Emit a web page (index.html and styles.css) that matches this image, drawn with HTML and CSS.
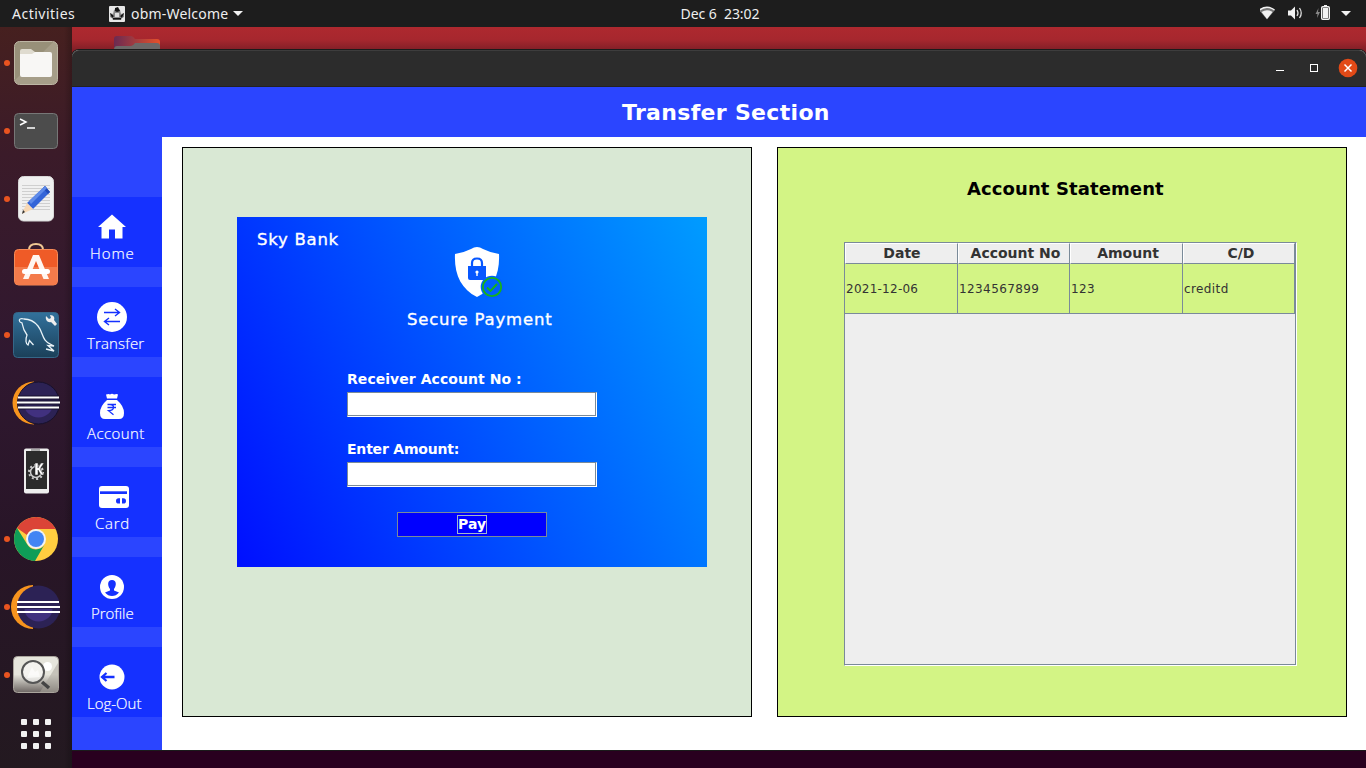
FILE: index.html
```
<!DOCTYPE html>
<html lang="en">
<head>
<meta charset="utf-8">
<title>obm-Welcome</title>
<link rel="stylesheet" href="styles.css">
</head>
<body>
<div class="topbar">
  <div class="top-left">
    <span class="activities">Activities</span>
    <svg class="app-icon" width="16" height="16" viewBox="0 0 16 16"><rect width="16" height="16" rx="1" fill="#e6e6e6"/><path d="M8 2l3 2 1 4 3-1v4l-2 1-1 2H4l-1-2-2-1V7l3 1 1-4z" fill="#888"/><path d="M6 2l3-1 2 4-3 1-2-1zM1 7l4 3-2 2zM15 7l-4 3 2 2zM4 12h8v1.500H4z" fill="#111"/><path d="M6 7h4v4H6z" fill="#ddd"/></svg>
    <span class="app-name">obm-Welcome</span>
    <svg width="10" height="5" viewBox="0 0 10 5"><path d="M0 0h10L5 5z" fill="#f2f2f2"/></svg>
  </div>
  <div class="clock">Dec 6&nbsp; 23:02</div>
  <svg class="tray" width="106" height="27" viewBox="1260 0 106 27">
    <path d="M1259 10q8-6 16 0l-8 9.500z" fill="#777"/><path d="M1259.500 10q7.500-5.500 15 0" fill="none" stroke="#f2f2f2" stroke-width="1.500"/><path d="M1261.500 12q5.500-3.500 11 0l-5.500 7z" fill="#f2f2f2"/>
    <path d="M1288 10.500h3l4-4v13l-4-4h-3z" fill="#f2f2f2"/><path d="M1297 10q2 3 0 6M1299.500 8q3.500 5 0 10" fill="none" stroke="#ddd" stroke-width="1.300"/>
    <path d="M1318.500 8l-3 6h2l-.5 4 3-6h-2z" fill="#888"/><rect x="1321.700" y="6.700" width="7.600" height="12.600" rx="1" fill="none" stroke="#f2f2f2" stroke-width="1.400"/><path d="M1324 5h3v1.500h-3zM1323 8h5v10h-5z" fill="#f2f2f2"/>
    <path d="M1341 11h10l-5 5z" fill="#f2f2f2"/>
  </svg>
</div>
<div class="desktop">
  <div class="dock">
    <svg class="launcher" viewBox="0 0 72 68"><defs><linearGradient id="tan" x1="0" y1="0" x2="1" y2="1"><stop offset=".45" stop-color="#989079"/><stop offset=".46" stop-color="#a69e89"/></linearGradient></defs><circle cx="7" cy="34" r="3" fill="#e95420"/><rect x="14.500" y="12.500" width="43" height="43" rx="5" fill="url(#tan)" stroke="#bdb6a4"/><path d="M20 24v-2q0-2 2-2h9l4 3h14v6H20z" fill="#dfdbcf"/><path d="M20 25h12l3-2h15q2 0 2 2v21q0 2-2 2H22q-2 0-2-2z" fill="#f8f7f5"/></svg>
    <svg class="launcher" viewBox="0 0 72 68"><circle cx="7" cy="34" r="3" fill="#e95420"/><rect x="14.500" y="16.500" width="43" height="35" rx="4" fill="#4c4c4c" stroke="#777"/><path d="M20 22l6 3-6 3M27 31h8" fill="none" stroke="#fff" stroke-width="1.500"/></svg>
    <svg class="launcher" viewBox="0 0 72 68"><circle cx="7" cy="34" r="3" fill="#e95420"/><rect x="18.500" y="11.500" width="35" height="44.500" rx="5" fill="#f0f0f0" stroke="#d8d8d8"/><path d="M22 20.500h28M22 23.500h28M22 26.500h28M22 29.500h28M22 32.500h28M22 35.500h28M22 38.500h28M22 41.500h28M22 44.500h28" stroke="#cfcfcf"/><path d="M45 21l5 6-17 17-6-6z" fill="#3465d8"/><path d="M43 23l2-2 5 6-2 2z" fill="#204bb8"/><path d="M29 36l16-15 2 2-16 16z" fill="#5f8be9"/><path d="M27 38l6 6-9 4-2 1 1-3z" fill="#f7d8b5"/><path d="M23 45l2 2-3 2z" fill="#333"/></svg>
    <svg class="launcher" viewBox="0 0 72 68"><path d="M29 19v-2q0-6 7-6t7 6v2" fill="none" stroke="#efc793" stroke-width="2"/><rect x="14.500" y="16.500" width="43" height="35.500" rx="4" fill="#ef5b27" stroke="#f58b58"/><path d="M15 34h42v14q0 4-4 4H19q-4 0-4-4z" fill="#f47b4b"/><path d="M33 22h6l10 24h-5.500l-7.500-18-7.500 18H23z" fill="#fff6f0"/><rect x="22" y="36" width="28" height="5" rx="2.500" fill="#fff"/></svg>
    <svg class="launcher" viewBox="0 0 72 68"><defs><linearGradient id="sea" x2="0" y2="1"><stop stop-color="#32719c"/><stop offset="1" stop-color="#1b4059"/></linearGradient></defs><circle cx="7" cy="34" r="3" fill="#e95420"/><rect x="13.500" y="11.500" width="45" height="45" rx="4" fill="url(#sea)" stroke="#356788"/><path d="M20 21c-2-3 1-4 4-3 6 0 10 2 14 7 4 5 4 10 7 14 2 3 5 4 9 6l-6-.5 6 5.500-8-2M20 21l2 1c1 6 2 8 5 12-2 5-1 9 1 10l1.500-4.500 4 4.500" fill="none" stroke="#e8f2f7" stroke-width="1.300"/><path d="M46 15l3 3 2-1-1-3c4 0 5 3 4 5l3 4-2 2-4-4c-3 1-6-2-5-6z" fill="#eee"/></svg>
    <svg class="launcher" viewBox="0 0 72 68"><path d="M34 12.500a21.500 21.500 0 0 0 0 43z" fill="#f7941e"/><circle cx="38.500" cy="34" r="21" fill="#2c2255" stroke="#17112c"/><path d="M24.500 36a14 12.500 0 0 0 28 0z" fill="#41317f"/><path d="M18 28.500h41M17 33.500h43M18 38.500h41" stroke="#17112c" stroke-width="4"/><path d="M18 28.500h41M17 33.500h43M18 38.500h41" stroke="#fff" stroke-width="2.200"/></svg>
    <svg class="launcher" viewBox="0 0 72 68"><rect x="24" y="11.500" width="25" height="45" rx="2" fill="#eee"/><rect x="26" y="14" width="21" height="38" fill="#2b2b2b"/><path d="M31 12h9v2h-9z" fill="#aaa"/><circle cx="36" cy="35" r="5.500" fill="none" stroke="#ccc" stroke-width="1.500"/><circle cx="36" cy="35" r="7" fill="none" stroke="#ccc" stroke-width="2" stroke-dasharray="2 2.400"/><path d="M35 26h3v5l3-5h3l-4 6 4 6h-3l-3-5v5h-3z" fill="#fff" stroke="#2b2b2b" stroke-width=".5"/></svg>
    <svg class="launcher" viewBox="0 0 72 68"><circle cx="7" cy="34" r="3" fill="#e95420"/><circle cx="36" cy="34" r="22" fill="#ffcd40"/><path d="M17 23a22 22 0 0 1 38.700 1H36a10 10 0 0 0-9 6z" fill="#db4437"/><path d="M17 23a22 22 0 0 0 18 33l9.500-16.500A10 10 0 0 1 27 39z" fill="#0f9d58"/><circle cx="36" cy="34" r="10" fill="#f2f2f2"/><circle cx="36" cy="34" r="8" fill="#4285f4"/></svg>
    <svg class="launcher" viewBox="0 0 72 68"><circle cx="7" cy="34" r="3" fill="#e95420"/><path d="M33 12a22 22 0 0 0 0 44z" fill="#f7941e"/><circle cx="38.500" cy="34" r="21.500" fill="#2c2255"/><path d="M24.500 36a14 12.500 0 0 0 28 0z" fill="#41317f"/><path d="M17 29h42M17 34h43M17 39h43" stroke="#fff" stroke-width="2"/></svg>
    <svg class="launcher" viewBox="0 0 72 68"><defs><linearGradient id="photo" x2="0" y2="1"><stop offset=".5" stop-color="#e6e5dc"/><stop offset="1" stop-color="#6d6663"/></linearGradient></defs><circle cx="7" cy="34" r="3" fill="#e95420"/><rect x="13.500" y="15.500" width="45" height="36" rx="4" fill="url(#photo)" stroke="#aaa59d"/><path d="M40 51l18-29v25q0 4-4 4z" fill="#aaa59c" opacity=".55"/><circle cx="47.500" cy="25.500" r="4.500" fill="#fff"/><circle cx="33" cy="31" r="11" fill="#fff" fill-opacity=".55" stroke="#555" stroke-width="2"/><path d="M27 37l5-11 3 5 3-2 2 7z" fill="#fff" opacity=".6"/><path d="M42 41l7 6" stroke="#444" stroke-width="3.500"/></svg>
    <svg class="all-apps" viewBox="0 0 72 50"><g fill="#f2f2f2"><rect x="21" y="10" width="6" height="6" rx="1"/><rect x="33" y="10" width="6" height="6" rx="1"/><rect x="45" y="10" width="6" height="6" rx="1"/><rect x="21" y="22" width="6" height="6" rx="1"/><rect x="33" y="22" width="6" height="6" rx="1"/><rect x="45" y="22" width="6" height="6" rx="1"/><rect x="21" y="34" width="6" height="6" rx="1"/><rect x="33" y="34" width="6" height="6" rx="1"/><rect x="45" y="34" width="6" height="6" rx="1"/></g></svg>
  </div>
  <div class="workspace">
    <div class="wallpaper"><svg width="46" height="14" viewBox="0 0 46 14"><defs><linearGradient id="fold"><stop stop-color="#6a2a52"/><stop offset="1" stop-color="#e5502a"/></linearGradient></defs><path d="M0 14V3q0-3 3-3h14q2 0 4 3h22q3 0 3 3v8z" fill="url(#fold)"/><path d="M0 14q0-4 3-4h14q2 0 4-3h22q3 0 3 3v4z" fill="#6c6868"/></svg></div>
    <div class="window">
      <div class="titlebar">
        <svg width="100" height="37" viewBox="1266 50 100 37"><path d="M1276 70.500h8" stroke="#fff"/><rect x="1310.500" y="64.500" width="7" height="7" fill="none" stroke="#fff"/><circle cx="1348" cy="68" r="9.300" fill="#e24a17"/><path d="M1344.500 64.500l7 7m0-7l-7 7" stroke="#fff" stroke-width="1.500"/></svg>
      </div>
      <div class="app-header">Transfer Section</div>
      <div class="app-body">
        <div class="sidebar">
          <div class="nav-item"><svg width="90" height="45" viewBox="72 197 90 45"><path d="M112 214.500l14 12.500h-3.500v11.500h-7.500v-9h-6v9h-7.500V227H98z" fill="#fff"/></svg><span class="label home">Home</span></div>
          <div class="nav-item"><svg width="90" height="45" viewBox="72 287 90 45"><circle cx="112" cy="317" r="15" fill="#fff"/><path d="M104 312.500h15m-4-3.500l4.500 3.500-4.500 3.500M120 321.500h-15m4-3.500l-4.500 3.500 4.500 3.500" fill="none" stroke="#1531ff" stroke-width="1.400"/></svg><span class="label transfer">Transfer</span></div>
          <div class="nav-item"><svg width="90" height="45" viewBox="72 377 90 45"><path d="M106 394.500q3-1 4 0 2-1.500 4 0 3-1 4 0l-1 4h-10zM107 400h10q7 6 7 13 0 6-5 6h-14q-5 0-5-6 0-7 7-13z" fill="#fff"/><path d="M107.500 404.500h8.500M107.500 407.500h8.500M108 404.500h2q3.500 0 3.500 3t-5 3.200l5 4" fill="none" stroke="#1531ff" stroke-width="1.300"/></svg><span class="label account">Account</span></div>
          <div class="nav-item"><svg width="90" height="45" viewBox="72 467 90 45"><rect x="99" y="486" width="30" height="22" rx="3" fill="#fff"/><path d="M100 491.300h27v2.700h-27z" fill="#1531ff"/><path d="M120 498.200h-1.300a2.700 2.700 0 0 0 0 5.400h1.300zM122 498.200h1.300a2.700 2.700 0 0 1 0 5.400H122z" fill="#1531ff"/></svg><span class="label card-label">Card</span></div>
          <div class="nav-item"><svg width="90" height="45" viewBox="72 557 90 45"><circle cx="112" cy="587" r="12" fill="#fff"/><path d="M112 580c5 0 4.500 6 2 9v1.500l5 2q-3 3.500-7 3.500t-7-3.500l5-2V589c-2.500-3-3-9 2-9z" fill="#1531ff"/></svg><span class="label profile">Profile</span></div>
          <div class="nav-item"><svg width="90" height="45" viewBox="72 647 90 45"><circle cx="112" cy="677" r="12.500" fill="#fff"/><path d="M114.500 677H102m4.500-4l-4.500 4 4.500 4" fill="none" stroke="#1531ff" stroke-width="2.300"/></svg><span class="label logout">Log-Out</span></div>
        </div>
        <div class="content">
          <div class="panel pay-panel">
            <div class="pay-card">
              <div class="bank">Sky Bank</div>
              <svg class="shield" width="50" height="52" viewBox="454 246 50 52"><path d="M477 247q3 0 6 2 8 4 16 5c1 20-6 35-22 43-16-8-23-23-22-43q8-1 16-5 3-2 6-2z" fill="#fff"/><path d="M468 266h18v12q0 2-2 2h-14q-2 0-2-2z" fill="#0757ff"/><path d="M472 267v-4q0-4.500 5-4.500t5 4.500v4" fill="none" stroke="#0757ff" stroke-width="2.200"/><circle cx="477" cy="272" r="1.600" fill="#fff"/><path d="M476.300 272h1.400v4h-1.400z" fill="#fff"/><circle cx="492" cy="287" r="11.300" fill="#0060ff"/><circle cx="492" cy="287" r="9.200" fill="none" stroke="#17b317" stroke-width="1.800"/><path d="M487 287.500l3.500 3.500 6.500-7" fill="none" stroke="#17b317" stroke-width="1.900"/></svg>
              <div class="secure">Secure Payment</div>
              <div class="field-label">Receiver Account No :</div>
              <div class="field"></div>
              <div class="field-label second">Enter Amount:</div>
              <div class="field"></div>
              <div class="pay-button"><span>Pay</span></div>
            </div>
          </div>
          <div class="panel statement">
            <div class="statement-title">Account Statement</div>
            <div class="table">
              <div class="row head"><span>Date</span><span class="acc">Account No</span><span class="amt">Amount</span><span class="cd">C/D</span></div>
              <div class="row data"><span class="date">2021-12-06</span><span>1234567899</span><span>123</span><span class="word">creditd</span></div>
            </div>
          </div>
        </div>
      </div>
    </div>
  </div>
</div>
</body>
</html>
```
FILE: styles.css
```
* { box-sizing: border-box; }
body { margin: 0; width: 1366px; height: 768px; overflow: hidden; background: #29001f; font-family: "DejaVu Sans", sans-serif; }
svg { display: block; flex: none; }
.topbar { height: 27px; background: #1d1d1d; color: #eee; display: grid; grid-template-columns: 630px 180px 1fr; align-items: center; font: 14px/27px "Noto Sans", sans-serif; }
.top-left { display: flex; align-items: center; padding-left: 12px; }
.activities { width: 97px; letter-spacing: .5px; }
.app-icon { margin-right: 6px; }
.app-name { margin-right: 5px; letter-spacing: .2px; }
.clock { text-align: center; letter-spacing: -.05px; white-space: nowrap; }
.tray { justify-self: end; }
.desktop { display: flex; height: 741px; }
.dock { width: 72px; padding-top: 2px; background: linear-gradient(90deg, transparent 64px, rgba(0,0,0,.2)), linear-gradient(#46201f, #3b1b29 17%, #301830 44%, #281527 70%, #231920); }
.launcher { width: 72px; height: 68px; }
.all-apps { width: 72px; height: 50px; }
.workspace { width: 1294px; overflow: hidden; }
.wallpaper { height: 33px; margin-bottom: -10px; background: linear-gradient(#ae292f, #a6272e 13px, #811f27 23px); padding: 9px 0 0 42px; }
.window { position: relative; height: 700px; background: #fff; display: flex; flex-direction: column; box-shadow: 0 0 0 1px #1b1b1b; border-radius: 7px 7px 0 0; }
.titlebar { height: 37px; flex: none; background: #2c2c2c; border-top: 1px solid #3d3d3d; border-bottom: 1px solid #222; border-radius: 7px 7px 0 0; display: flex; justify-content: flex-end; align-items: center; }
.app-header { height: 50px; flex: none; background: #2b45ff; color: #fff; font-size: 22px; font-weight: bold; line-height: 51px; padding-left: 550px; letter-spacing: .32px; }
.app-body { display: flex; height: 613px; }
.sidebar { width: 90px; background: #2b45ff; padding-top: 60px; display: flex; flex-direction: column; gap: 20px; }
.nav-item { height: 70px; flex: none; background: #1531ff; color: #fff; }
.label { display: block; height: 22px; line-height: 22px; font-family: "Open Sans", "Noto Sans", sans-serif; font-weight: 300; font-size: 15px; -webkit-text-stroke: .2px #fff; white-space: nowrap; padding-left: 15px; }
.home { padding-left: 18px; letter-spacing: .9px; }
.transfer { letter-spacing: .15px; }
.account { letter-spacing: .4px; }
.card-label { padding-left: 23px; letter-spacing: .7px; }
.profile { padding-left: 19px; letter-spacing: -.05px; }
.content { display: flex; gap: 25px; padding: 10px 0 0 20px; }
.panel { width: 570px; height: 570px; border: 1px solid #000; }
.pay-panel { background: #d9e8d4; padding: 69px 0 0 54px; }
.pay-card { width: 470px; height: 350px; padding: 10px 0 0 110px; background: linear-gradient(63.5deg, #000fff, #009cff); color: #fff; }
.bank { margin-left: -90px; height: 19px; font-size: 16.5px; line-height: 25px; letter-spacing: .75px; -webkit-text-stroke: .35px #fff; }
.shield { margin-left: 107px; }
.secure { height: 71px; padding-left: 60px; font-size: 16.5px; line-height: 43px; letter-spacing: .8px; -webkit-text-stroke: .35px #fff; }
.field-label { height: 23px; font-size: 14px; font-weight: bold; line-height: 20px; letter-spacing: .05px; }
.second { margin-top: 22px; letter-spacing: -.2px; }
.field { width: 250px; height: 25px; background: #fff; border: 1px solid; border-color: #7a8a99 #fff #fff #7a8a99; box-shadow: inset -1px -1px #7a8a99; }
.pay-button { width: 150px; height: 25px; margin: 25px 0 0 50px; background: #00f; border: 1px solid #7a8a99; display: flex; justify-content: center; align-items: center; font-size: 14px; font-weight: bold; }
.pay-button span { border: 1px solid #a3b8cc; height: 19px; line-height: 16px; width: 30px; }
.statement { background: #d3f485; padding: 29px 0 0 66px; }
.statement-title { height: 65px; padding-left: 123px; font-size: 18px; font-weight: bold; line-height: 24px; letter-spacing: .1px; }
.table { width: 453px; height: 424px; background: #eee; border: 1px solid #7a8a99; border-right-color: #fff; border-bottom-color: #fff; box-shadow: inset -1px -1px #7a8a99; color: #333; }
.row { width: 450px; display: grid; grid-template-columns: 113px 112px 113px 112px; }
.row span { border-right: 1px solid #7a8a99; border-bottom: 1px solid #7a8a99; white-space: nowrap; }
.head span { height: 21px; border-left: 1px solid #fff; border-top: 1px solid #fff; font-size: 14px; font-weight: bold; line-height: 19px; text-align: center; padding-left: 1px; }
.head .acc, .head .amt { padding-left: 3px; }
.head .cd { padding-left: 4px; }
.data { background: #d3f485; }
.data span { height: 50px; line-height: 51px; font-size: 12px; letter-spacing: .4px; padding-left: 1px; }
.data .date { letter-spacing: .25px; }
```
